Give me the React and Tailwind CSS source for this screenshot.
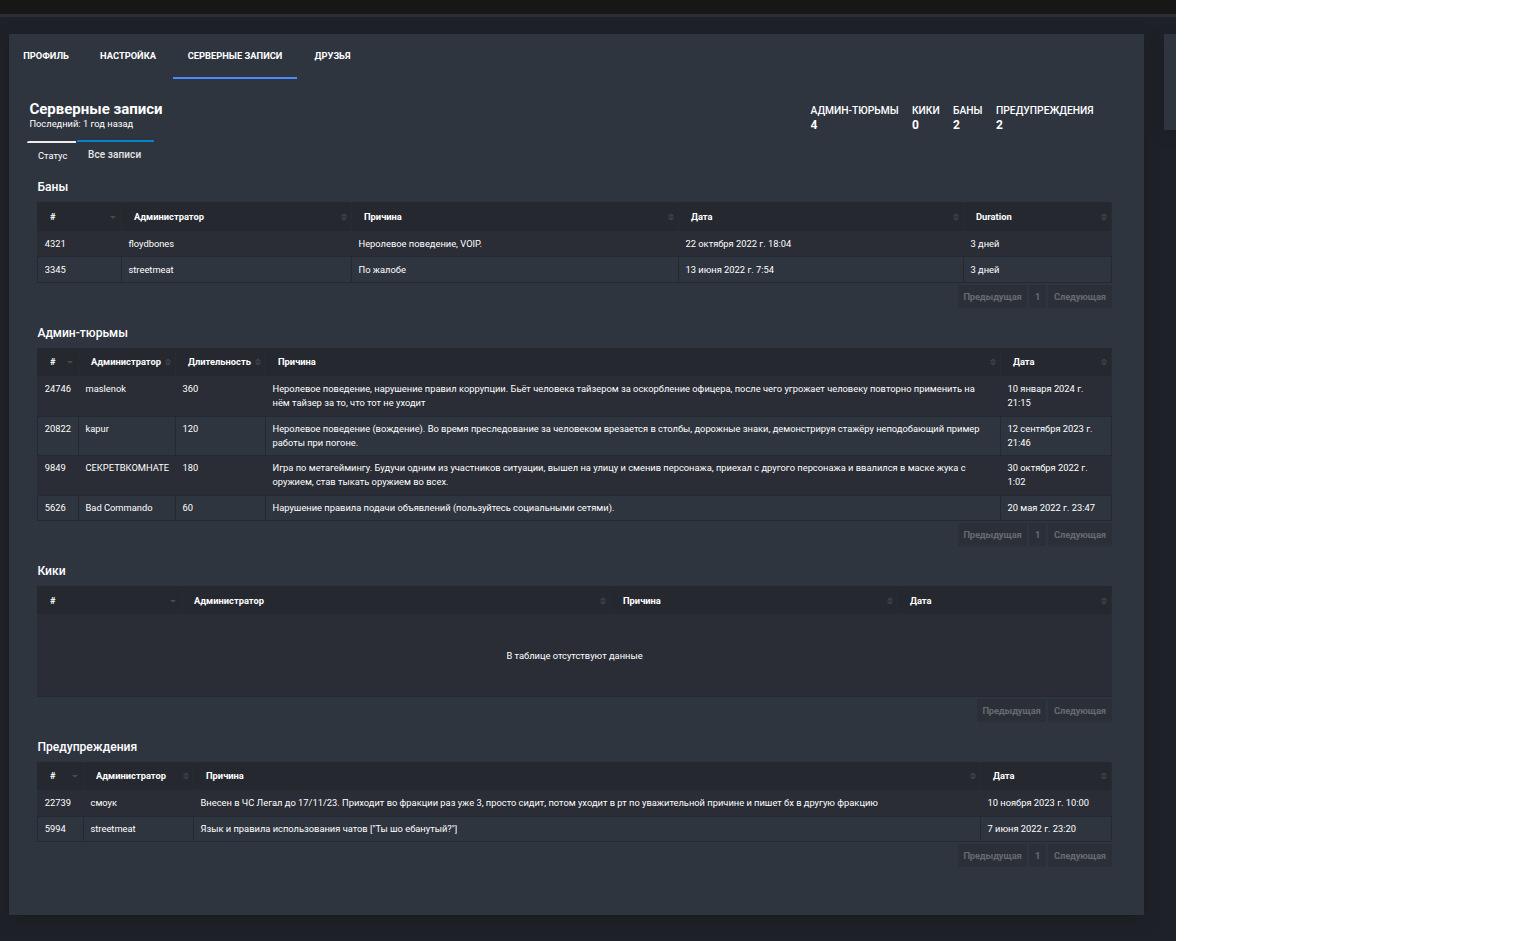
import React from "react";

function SortIcon({ mode }) {
  if (mode === "desc") {
    return (
      <svg className="mr-[1px] h-[8px] w-[6px] shrink-0" viewBox="0 0 6 8" fill="#484a4e">
        <path d="M0 3h6L3.4 5.6h-.8z" />
      </svg>
    );
  }
  return (
    <svg className="h-[8px] w-[6px] shrink-0" viewBox="0 0 6 8" fill="none" stroke="#44474c" strokeWidth="1">
      <path d="M0.6 2.9L3 0.9L5.4 2.9zM0.6 5.1L3 7.1L5.4 5.1z" />
    </svg>
  );
}

function Button({ width, children }) {
  return (
    <div
      className="flex items-center justify-center bg-[#2b3038] text-[9.33px] font-bold tracking-[-0.15px] text-[#676a71]"
      style={{ width }}
    >
      {children}
    </div>
  );
}

function Cell({ first, bordered, raised, width, children }) {
  return (
    <div
      className={[
        "shrink-0 text-[9.33px] leading-[14px] whitespace-pre text-white",
        raised ? "pt-[5px]" : "pt-[6px]",
        bordered ? "border-r border-[#252932]" : "",
        first ? (bordered ? "pl-[6.8px]" : "pl-[7.8px]") : "pl-[6.5px]",
      ].join(" ")}
      style={{ width }}
    >
      {children}
    </div>
  );
}

function Section({ title, headHeight, headOffset = 0, columns, rows, empty, gap, pagerGap }) {
  return (
    <section style={{ marginBottom: gap }}>
      <h3 className="h-[23px] pl-[0.4px] text-[12.1px] leading-[16px] font-medium text-white">{title}</h3>
      <div className="flex bg-[#25282f]" style={{ height: headHeight, paddingTop: headOffset }}>
        {columns.map((c, i) => (
          <div
            key={c.label}
            className={
              i === 0
                ? "flex shrink-0 items-center justify-between border-r border-[#282b32] pr-[4px] pl-[13px] text-[9.33px] font-bold text-white"
                : "flex shrink-0 items-center justify-between border-r border-[#282b32] pr-[4px] pl-[12px] text-[9.33px] font-bold text-white"
            }
            style={{ width: c.width }}
          >
            <span>{c.label}</span>
            <SortIcon mode={i === 0 ? "desc" : "both"} />
          </div>
        ))}
      </div>
      {rows.map((row, r) => {
        const even = r % 2 === 1;
        return (
          <div
            key={row.cells[0]}
            className={
              even
                ? "flex border-b border-l border-[#252932] bg-[#2f353f]"
                : "flex border-b border-[#252932] bg-[#2a2d35]"
            }
            style={{ height: row.height }}
          >
            {row.cells.map((cell, i) => (
              <Cell
                key={i}
                first={i === 0}
                bordered={even}
                raised={row.raised}
                width={columns[i].width - (even && i === 0 ? 1 : 0)}
              >
                {cell}
              </Cell>
            ))}
          </div>
        );
      })}
      {empty && (
        <div className="flex h-[83px] items-center justify-center border-b border-[#252932] bg-[#2a2d35] pt-[2px] text-[9.33px] text-white">
          {empty}
        </div>
      )}
      <div className="flex h-[23px] justify-end gap-[2px]" style={{ marginTop: pagerGap }}>
        <Button width={69}>Предыдущая</Button>
        {!empty && <Button width={17}>1</Button>}
        <Button width={64}>Следующая</Button>
      </div>
    </section>
  );
}

const sections = [
  {
    title: "Баны",
    headHeight: 29,
    gap: 17,
    pagerGap: 2,
    columns: [
      { label: "#", width: 85 },
      { label: "Администратор", width: 230 },
      { label: "Причина", width: 327 },
      { label: "Дата", width: 285 },
      { label: "Duration", width: 148 },
    ],
    rows: [
      { height: 26, cells: ["4321", "floydbones", "Неролевое поведение, VOIP.", "22 октября 2022 г. 18:04", "3 дней"] },
      { height: 26, cells: ["3345", "streetmeat", "По жалобе", "13 июня 2022 г. 7:54", "3 дней"] },
    ],
  },
  {
    title: "Админ-тюрьмы",
    headHeight: 28,
    gap: 17,
    pagerGap: 2,
    columns: [
      { label: "#", width: 42 },
      { label: "Администратор", width: 97 },
      { label: "Длительность", width: 90 },
      { label: "Причина", width: 735 },
      { label: "Дата", width: 111 },
    ],
    rows: [
      {
        height: 41,
        cells: [
          "24746",
          "maslenok",
          "360",
          "Неролевое поведение, нарушение правил коррупции. Бьёт человека тайзером за оскорбление офицера, после чего угрожает человеку повторно применить на\nнём тайзер за то, что тот не уходит",
          "10 января 2024 г.\n21:15",
        ],
      },
      {
        height: 39,
        raised: true,
        cells: [
          "20822",
          "kapur",
          "120",
          "Неролевое поведение (вождение). Во время преследование за человеком врезается в столбы, дорожные знаки, демонстрируя стажёру неподобающий пример\nработы при погоне.",
          "12 сентября 2023 г.\n21:46",
        ],
      },
      {
        height: 40,
        raised: true,
        cells: [
          "9849",
          "СЕКРЕТВКОМНАТЕ",
          "180",
          "Игра по метагеймингу. Будучи одним из участников ситуации, вышел на улицу и сменив персонажа, приехал с другого персонажа и ввалился в маске жука с\nоружием, став тыкать оружием во всех.",
          "30 октября 2022 г.\n1:02",
        ],
      },
      {
        height: 25,
        raised: true,
        cells: [
          "5626",
          "Bad Commando",
          "60",
          "Нарушение правила подачи объявлений (пользуйтесь социальными сетями).",
          "20 мая 2022 г. 23:47",
        ],
      },
    ],
  },
  {
    title: "Кики",
    headHeight: 28,
    headOffset: 2,
    gap: 17,
    pagerGap: 2,
    columns: [
      { label: "#", width: 145 },
      { label: "Администратор", width: 429 },
      { label: "Причина", width: 287 },
      { label: "Дата", width: 214 },
    ],
    rows: [],
    empty: "В таблице отсутствуют данные",
  },
  {
    title: "Предупреждения",
    headHeight: 28,
    gap: 0,
    pagerGap: 2,
    columns: [
      { label: "#", width: 47 },
      { label: "Администратор", width: 110 },
      { label: "Причина", width: 787 },
      { label: "Дата", width: 131 },
    ],
    rows: [
      {
        height: 27,
        cells: [
          "22739",
          "смоук",
          "Внесен в ЧС Легал до 17/11/23. Приходит во фракции раз уже 3, просто сидит, потом уходит в рт по уважительной причине и пишет бх в другую фракцию",
          "10 ноября 2023 г. 10:00",
        ],
      },
      {
        height: 25,
        raised: true,
        cells: ["5994", "streetmeat", "Язык и правила использования чатов [\"Ты шо ебанутый?\"]", "7 июня 2022 г. 23:20"],
      },
    ],
  },
];

const tabs = [
  { label: "ПРОФИЛЬ", width: 74 },
  { label: "НАСТРОЙКА", width: 90 },
  { label: "СЕРВЕРНЫЕ ЗАПИСИ", width: 124, active: true },
  { label: "ДРУЗЬЯ", width: 71 },
];

const stats = [
  { label: "АДМИН-ТЮРЬМЫ", value: 4, width: 101.5 },
  { label: "КИКИ", value: 0, width: 41 },
  { label: "БАНЫ", value: 2, width: 43 },
  { label: "ПРЕДУПРЕЖДЕНИЯ", value: 2, width: 120 },
];

export default function App() {
  return (
    <div className="h-[941px] w-full overflow-hidden bg-white font-['Roboto','Noto_Sans',sans-serif]">
      <div className="flex h-[941px] w-[1176px] flex-col overflow-hidden bg-[#1f2129]">
        <div className="h-[14px] shrink-0 bg-[#171717]" />
        <div className="h-[3px] shrink-0 bg-[#2b2e35]" />
        <div className="flex items-start gap-[20px] pt-[17px] pl-[9px]">
          <main className="h-[881px] w-[1135px] shrink-0 bg-[#2f353f] shadow-[0_5px_12px_0_#1b1e20]">
            <nav className="flex h-[45px]">
              {tabs.map((t) => (
                <div
                  key={t.label}
                  className={
                    t.active
                      ? "flex shrink-0 justify-center border-b-2 border-[#4a8cff] pt-[14px] text-[9.33px] leading-[16px] font-bold text-white"
                      : "flex shrink-0 justify-center pt-[14px] text-[9.33px] leading-[16px] font-bold text-white"
                  }
                  style={{ width: t.width }}
                >
                  {t.label}
                </div>
              ))}
            </nav>

            <header className="flex h-[61px] justify-between pt-[21px] pl-[20.4px]">
              <div>
                <h2 className="text-[15px] leading-[18px] font-bold text-white">Серверные записи</h2>
                <p className="text-[9.33px] leading-[12px] text-white">Последний: 1 год назад</p>
              </div>
              <div className="flex pt-[4px] pr-[28px]">
                {stats.map((s) => (
                  <div key={s.label} style={{ width: s.width }}>
                    <div className="text-[10.27px] leading-[14px] font-medium whitespace-nowrap text-white">
                      {s.label}
                    </div>
                    <div className="text-[12px] leading-[14px] font-bold text-white">{s.value}</div>
                  </div>
                ))}
              </div>
            </header>

            <div className="flex h-[39px] items-start pl-[18px]">
              <div className="mt-[1px] h-[24px] w-[49px] rounded-tl-[2px] border-t-2 border-[#eeeeee] pt-[6px] pl-[11px] text-[9.33px] leading-[14px] text-white">
                Статус
              </div>
              <div className="ml-[1px] h-[24px] w-[77px] rounded-t-[1px] border-t-2 border-[#0584cb] pt-[6px] pl-[11px] text-[10px] leading-[14px] font-medium tracking-[0.1px] whitespace-nowrap text-[#e6e6e6]">
                Все записи
              </div>
            </div>

            <div className="w-[1103px] pl-[28px]">
              {sections.map((s) => (
                <Section key={s.title} {...s} />
              ))}
            </div>
          </main>
          <aside className="h-[96px] w-[12px] shrink-0 bg-[#2f353f] shadow-[0_5px_12px_0_#1b1e20]" />
        </div>
      </div>
    </div>
  );
}
